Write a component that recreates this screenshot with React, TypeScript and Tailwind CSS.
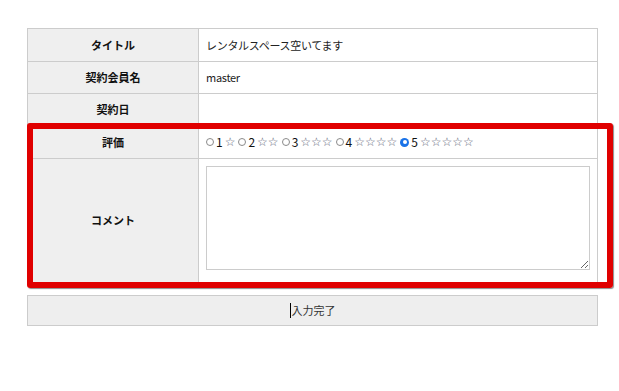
import type { ReactNode } from "react";

const font = {
  fontFamily: '"Noto Sans CJK JP", "Noto Sans", sans-serif',
};

const rows = [
  { label: "タイトル", value: "レンタルスペース空いてます", h: "h-[33px]" },
  { label: "契約会員名", value: "master", h: "h-[32px]" },
  { label: "契約日", value: "", h: "h-[32px]" },
];

function Row({
  label,
  h,
  children,
  last,
  top,
}: {
  label: string;
  h: string;
  children: ReactNode;
  last?: boolean;
  top?: boolean;
}) {
  return (
    <div className={`flex ${h} ${last ? "" : "border-b border-[#cccccc]"}`}>
      <div className="flex w-[171px] shrink-0 items-center justify-center border-r border-[#cccccc] bg-[#efefef] text-[11px] font-bold text-[#111]">
        {label}
      </div>
      <div
        className={`flex flex-1 px-[7px] text-[11px] tracking-[-0.3px] text-[#222] ${
          top ? "items-start pt-[7px]" : "items-center"
        }`}
      >
        {children}
      </div>
    </div>
  );
}

function Radio({ checked }: { checked?: boolean }) {
  return checked ? (
    <span className="inline-flex h-[9px] w-[9px] items-center justify-center rounded-full bg-[#1a73e8]">
      <span className="h-[4px] w-[4px] rounded-full bg-white" />
    </span>
  ) : (
    <span className="inline-block h-[8px] w-[8px] rounded-full border border-[#8a8a8a] bg-white" />
  );
}

function Rating() {
  return (
    <div className="flex items-center gap-[3px] tracking-normal">
      {[1, 2, 3, 4, 5].map((n) => (
        <span key={n} className="flex items-center gap-[2px]">
          <Radio checked={n === 5} />
          <span className="text-[12px] text-[#111]">{n}</span>
          <span
            className="text-[12px] text-[#5a6075]"
            style={{ fontFamily: '"DejaVu Sans", sans-serif' }}
          >
            {"☆".repeat(n)}
          </span>
        </span>
      ))}
    </div>
  );
}

export default function App() {
  return (
    <div className="relative h-[391px] w-[619px] bg-white" style={font}>
      <div className="pl-[27px] pt-[28px]">
        <div className="w-[571px] border border-[#cccccc]">
          {rows.map((r) => (
            <Row key={r.label} label={r.label} h={r.h}>
              {r.value}
            </Row>
          ))}
          <Row label="評価" h="h-[33px]">
            <Rating />
          </Row>
          <Row label="コメント" h="h-[123px]" last top>
            <textarea
              className="h-[104px] w-[384px] resize border border-[#cccccc] bg-white"
              readOnly
            />
          </Row>
        </div>
        <button className="mt-[12px] flex h-[31px] w-[571px] items-center justify-center border border-[#cccccc] bg-[#eeeeee] text-[11px] text-[#333]">
          <span className="mr-[1px] h-[15px] w-[1px] bg-black" />
          入力完了
        </button>
      </div>
      <div className="pointer-events-none absolute left-[27px] top-[123px] h-[165px] w-[586px] rounded-[3px] border-[6px] border-[#e00000] shadow-[1px_1px_1px_rgba(0,0,0,0.45)]" />
    </div>
  );
}
